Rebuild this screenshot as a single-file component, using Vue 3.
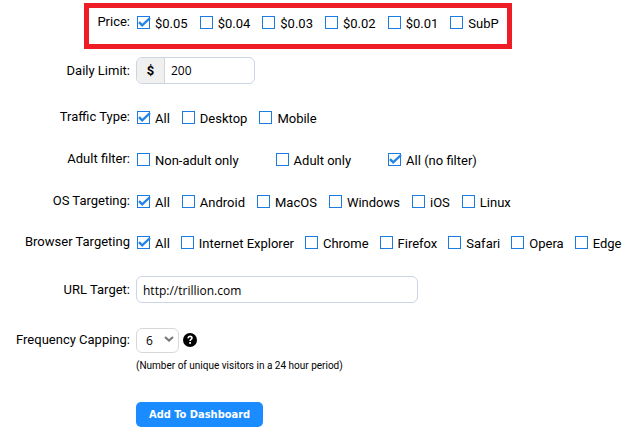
<script setup>
import { ref } from 'vue'

const option = (label, checked = false) => ({ label, checked })

const groups = ref([
  {
    id: 'price',
    title: 'Price:',
    options: [option('$0.05', true), option('$0.04'), option('$0.03'), option('$0.02'), option('$0.01'), option('SubP')],
  },
  {
    id: 'traffic',
    title: 'Traffic Type:',
    options: [option('All', true), option('Desktop'), option('Mobile')],
  },
  {
    id: 'adult',
    title: 'Adult filter:',
    options: [option('Non-adult only'), option('Adult only'), option('All (no filter)', true)],
  },
  {
    id: 'os',
    title: 'OS Targeting:',
    options: [option('All', true), option('Android'), option('MacOS'), option('Windows'), option('iOS'), option('Linux')],
  },
  {
    id: 'browser',
    title: 'Browser Targeting',
    options: [
      option('All', true),
      option('Internet Explorer'),
      option('Chrome'),
      option('Firefox'),
      option('Safari'),
      option('Opera'),
      option('Edge'),
    ],
  },
])

const dailyLimit = ref('200')
const url = ref('http://trillion.com')
const capping = ref('6')
</script>

<template>
  <form class="campaign" @submit.prevent>
    <template v-for="group in groups" :key="group.id">
      <div class="row" :class="group.id" role="group" :aria-labelledby="group.id + '-title'">
        <span :id="group.id + '-title'" class="title">{{ group.title }}</span>
        <div class="options">
          <label v-for="item in group.options" :key="item.label" class="option">
            <input v-model="item.checked" type="checkbox" class="native" />
            <svg class="box" viewBox="0 0 14 13" aria-hidden="true">
              <rect x="0.5" y="0.5" width="12" height="12" fill="#fff" stroke="#1b7be0" />
              <path v-if="item.checked" d="M2 6.2 5.2 9.4 13 2" fill="none" stroke="#2483e6" stroke-width="2.4" />
            </svg>
            <span class="text">{{ item.label }}</span>
          </label>
        </div>
      </div>

      <div v-if="group.id === 'price'" class="row limit">
        <label class="title" for="daily-limit">Daily Limit:</label>
        <div class="money">
          <span class="currency">$</span>
          <input id="daily-limit" v-model="dailyLimit" type="text" />
        </div>
      </div>
    </template>

    <div class="row url">
      <label class="title" for="url-target">URL Target:</label>
      <input id="url-target" v-model="url" class="field" type="text" />
    </div>

    <div class="row capping">
      <label class="title" for="capping">Frequency Capping:</label>
      <div class="picker">
        <div class="select">
          <select id="capping" v-model="capping">
            <option>6</option>
            <option>12</option>
            <option>24</option>
          </select>
          <svg class="chevron" viewBox="0 0 10 6" aria-hidden="true">
            <path d="M1 1 5 4.6 9 1" fill="none" stroke="#777" stroke-width="2" />
          </svg>
        </div>
        <svg class="help" viewBox="0 0 14 14" aria-hidden="true">
          <circle cx="7" cy="7" r="7" />
          <path d="M5 5.3C5.2 3.8 6 3.4 7 3.4c1.2 0 2 .7 2 1.7C9 6.5 7.1 6.4 7.1 8" fill="none" stroke="#fff" stroke-width="1.6" />
          <rect x="6.2" y="9.1" width="1.8" height="1.7" fill="#fff" />
        </svg>
      </div>
    </div>
    <p class="note">(Number of unique visitors in a 24 hour period)</p>

    <button class="submit" type="submit">Add To Dashboard</button>
  </form>
</template>

<style>
body {
  background: #fff;
}
</style>

<style scoped>
.campaign {
  padding: 9px 0 4px;
  color: #000;
  font: 13px/16px Roboto, sans-serif;
}

.row {
  position: relative;
  display: grid;
  grid-template-columns: 130px minmax(0, 1fr);
  column-gap: 6px;
  align-items: center;
  min-height: 26px;
  margin-bottom: 16px;
}

.title {
  text-align: right;
  white-space: nowrap;
}

.price {
  margin-bottom: 22px;
}

.price::after {
  content: '';
  position: absolute;
  inset: -6px auto -14px 84px;
  width: 428px;
  box-sizing: border-box;
  border: 5px solid #ee1c25;
  pointer-events: none;
}

.limit {
  margin-bottom: 20px;
}

.os {
  margin-bottom: 15px;
}

.browser {
  margin-bottom: 21px;
}

.options {
  display: flex;
  gap: 12px;
  padding-left: 1px;
}

.browser .options {
  gap: 11px;
}

.adult .options {
  gap: 37px;
}

.option {
  position: relative;
  display: flex;
  align-items: center;
  gap: 4px;
  white-space: nowrap;
}

.native {
  position: absolute;
  inset: 0;
  width: 100%;
  height: 100%;
  margin: 0;
  opacity: 0;
}

.box {
  flex: none;
  width: 14px;
  height: 13px;
}

.text {
  padding-top: 4px;
}

.money,
.field {
  box-sizing: border-box;
  height: 27px;
  border: 1px solid #cbd5e6;
  border-radius: 6px;
  background: #fff;
}

.money {
  display: flex;
  width: 119px;
  overflow: hidden;
}

.currency {
  display: grid;
  place-items: center;
  box-sizing: border-box;
  width: 28px;
  border-right: 1px solid #d5d5d5;
  background: #f0f0f0;
  font-weight: 700;
}

.money input {
  flex: 1;
  min-width: 0;
  padding: 0 6px;
  border: 0;
  background: none;
}

.money input,
.field,
select {
  color: #000;
  font: 12px/16px 'Open Sans', sans-serif;
}

.field {
  width: 100%;
  max-width: 282px;
  padding: 2px 6px 0;
}

.url {
  margin-bottom: 24px;
}

.capping {
  margin-bottom: 5px;
}

.picker {
  display: flex;
  align-items: center;
  gap: 4px;
}

.select {
  position: relative;
}

select {
  display: block;
  box-sizing: border-box;
  width: 43px;
  height: 25px;
  padding: 2px 9px 0;
  border: 1px solid #d8d8d8;
  border-radius: 6px;
  background: #fff;
  appearance: none;
}

.chevron {
  position: absolute;
  top: 8px;
  right: 5px;
  width: 10px;
  height: 6px;
  pointer-events: none;
}

.help {
  width: 14px;
  height: 14px;
}

.note {
  margin: 0 0 28px 136px;
  font-size: 10px;
  line-height: 16px;
}

.submit {
  display: block;
  height: 25px;
  margin-left: 136px;
  padding: 0 13px;
  border: 0;
  border-radius: 5px;
  background: #1a8cff;
  color: #fff;
  font: 700 11px/16px 'DejaVu Sans Condensed', 'DejaVu Sans', sans-serif;
}
</style>
